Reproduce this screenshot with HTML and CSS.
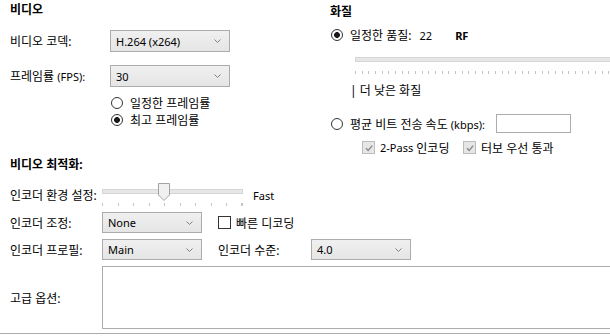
FILE: index.html
```html
<!DOCTYPE html>
<html lang="ko">
<head>
  <meta charset="UTF-8">
  <title>비디오</title>
  <link rel="stylesheet" href="styles.css">
</head>
<body>
  <div class="top">
    <!-- 비디오 -->
    <div class="col-left">
      <div class="title">비디오</div>
      <div class="row row-codec">
        <span class="label">비디오 코덱:</span>
        <div class="select wide">H.264 (x264)<svg class="chev" width="7" height="4"><path d="M0.5 0.5 L3.5 3.5 L6.5 0.5" stroke="#808080" fill="none"/></svg></div>
      </div>
      <div class="row row-fps">
        <span class="label">프레임률 <span class="en">(FPS):</span></span>
        <div class="select wide">30<svg class="chev" width="7" height="4"><path d="M0.5 0.5 L3.5 3.5 L6.5 0.5" stroke="#808080" fill="none"/></svg></div>
      </div>
      <div class="radios">
        <div class="opt"><span class="radio"></span>일정한 프레임률</div>
        <div class="opt"><span class="radio on"></span>최고 프레임률</div>
      </div>
    </div>
    <!-- 화질 -->
    <div class="col-right">
      <div class="title title-q">화질</div>
      <div class="opt opt-q">
        <span class="radio on"></span>일정한 품질:<span class="en rf-val">22</span><b class="en rf">RF</b>
      </div>
      <div class="q-track"></div>
      <div class="q-ticks"></div>
      <div class="lower">| 더 낮은 화질</div>
      <div class="opt opt-rate">
        <span class="radio"></span><span class="rate-label">평균 비트 전송 속도 <span class="en">(kbps):</span></span><div class="textbox"></div>
      </div>
      <div class="checks">
        <div class="chk-item first">
          <span class="chk dis"><svg width="10" height="10"><path d="M2 5.2 L4.2 7.4 L8.2 2.6" stroke="#8a8a8a" stroke-width="1.4" fill="none"/></svg></span><span class="en">2-Pass</span>&nbsp;인코딩
        </div>
        <div class="chk-item">
          <span class="chk dis"><svg width="10" height="10"><path d="M2 5.2 L4.2 7.4 L8.2 2.6" stroke="#8a8a8a" stroke-width="1.4" fill="none"/></svg></span>터보 우선 통과
        </div>
      </div>
    </div>
  </div>

  <!-- 비디오 최적화 -->
  <div class="opt-section">
    <div class="title">비디오 최적화:</div>
    <div class="orow row-preset">
      <span class="olabel">인코더 환경 설정:</span>
      <div class="pslider">
        <div class="track"></div>
        <div class="ticks"></div>
        <svg class="thumb" width="12" height="18"><path d="M0.5 0.5 H11.5 V12 L6 17.5 L0.5 12 Z" fill="#f0f0f0" stroke="#a2a2a2"/></svg>
      </div>
      <span class="en fast">Fast</span>
    </div>
    <div class="orow row-tune">
      <span class="olabel">인코더 조정:</span>
      <div class="select narrow">None<svg class="chev" width="7" height="4"><path d="M0.5 0.5 L3.5 3.5 L6.5 0.5" stroke="#808080" fill="none"/></svg></div>
      <span class="chk plain"></span>빠른 디코딩
    </div>
    <div class="orow row-profile">
      <span class="olabel">인코더 프로필:</span>
      <div class="select narrow">Main<svg class="chev" width="7" height="4"><path d="M0.5 0.5 L3.5 3.5 L6.5 0.5" stroke="#808080" fill="none"/></svg></div>
      <span class="level-label">인코더 수준:</span>
      <div class="select narrow">4.0<svg class="chev" width="7" height="4"><path d="M0.5 0.5 L3.5 3.5 L6.5 0.5" stroke="#808080" fill="none"/></svg></div>
    </div>
    <div class="orow row-adv">
      <span class="olabel">고급 옵션:</span>
      <div class="adv-box"></div>
    </div>
  </div>
  <div class="sep"></div>
</body>
</html>
```

FILE: styles.css
```css
* {margin: 0; padding: 0; box-sizing: border-box;}
body {
  width: 610px;
  height: 336px;
  overflow: hidden;
  background: #fff;
  color: #000;
  font: 12px "Noto Sans", "Noto Sans CJK KR", sans-serif;
}
/* 영문은 조금 작게 */
.en {font-size: 11px;}
.top {
  display: flex;
  height: 155px;
}
.col-left {
  width: 320px;
  flex: none;
  padding-left: 10px;
}
.col-right {
  flex: 1;
  padding-left: 10px;
  white-space: nowrap;
  overflow: hidden;
}
.title {
  font-weight: bold;
  line-height: 16px;
  height: 18px;
  padding-top: 2px;
}
.title-q {
  padding-top: 4px;
  height: 20px;
}
.row {
  display: flex;
  align-items: center;
}
.label {
  width: 100px;
}
.row-codec {margin-top: 12px;}
.row-fps {margin-top: 13px;}
.select {
  height: 22px;
  border: 1px solid #acacac;
  background: linear-gradient(#f0f0f0, #e5e5e5);
  padding: 0 8px 0 5px;
  display: flex;
  align-items: center;
  justify-content: space-between;
  font-size: 11px;
}
.select.wide {width: 120px;}
.select.narrow {width: 100px; height: 21px;}
.chev {display: block;}

/* 라디오 */
.radios {
  margin-top: 7px;
  padding-left: 101px;
}
.opt {
  display: flex;
  align-items: center;
  height: 17px;
}
.radio {
  width: 12px;
  height: 12px;
  flex: none;
  border: 1px solid #333;
  border-radius: 50%;
  background: #fff;
  margin-right: 7px;
}
.radio.on {
  background: radial-gradient(circle, #1a1a1a 2.6px, #fff 3.2px);
}

/* 화질 */
.opt-q {
  margin-top: 7px;
  height: 16px;
  padding-left: 1px;
}
.rf-val {margin-left: 8px;}
.rf {margin-left: 23px;}
.q-track {
  margin-top: 14px;
  margin-left: 25px;
  height: 5px;
  border: 1px solid #d6d6d6;
  border-right: none;
  background: #e7e7e7;
}
.q-ticks {
  margin-top: 9px;
  margin-left: 25px;
  height: 3px;
  background: repeating-linear-gradient(to right, #c4c4c4 0 1px, transparent 1px 6.67px);
}
.lower {
  margin-top: 9px;
  margin-left: 20px;
  line-height: 16px;
}
.opt-rate {
  margin-top: 15px;
  height: 19px;
  padding-left: 1px;
}
.rate-label {width: 146px;}
.textbox {
  width: 75px;
  height: 19px;
  border: 1px solid #acacac;
  background: #fff;
}
.checks {
  display: flex;
  margin-top: 8px;
  padding-left: 32px;
  height: 13px;
  align-items: center;
}
.chk-item {
  display: flex;
  align-items: center;
}
.chk-item.first {width: 101px;}
.chk {
  width: 13px;
  height: 13px;
  flex: none;
  display: flex;
  align-items: center;
  justify-content: center;
  margin-right: 5px;
}
.chk.dis {
  border: 1px solid #bcbcbc;
  background: #e6e6e6;
}
.chk.plain {
  border: 1px solid #333;
  background: #fff;
  margin-left: 16px;
}

/* 비디오 최적화 */
.opt-section {
  padding-left: 10px;
  white-space: nowrap;
}
.orow {
  display: flex;
  align-items: center;
}
.olabel {
  width: 92px;
  flex: none;
}
.row-preset {
  margin-top: 10px;
  height: 24px;
}
.pslider {
  position: relative;
  width: 141px;
  height: 24px;
}
.track {
  margin-top: 6px;
  height: 5px;
  border: 1px solid #d6d6d6;
  background: #e7e7e7;
}
.ticks {
  margin-top: 9px;
  height: 3px;
  background: repeating-linear-gradient(to right, #c4c4c4 0 1px, transparent 1px 15.5px);
}
.thumb {
  position: absolute;
  left: 56px;
  top: 0;
}
.fast {margin-left: 10px;}
.row-tune {
  margin-top: 5px;
  height: 21px;
}
.row-profile {
  margin-top: 6px;
  height: 21px;
}
.level-label {
  width: 93px;
  margin-left: 16px;
}
.row-adv {
  margin-top: 6px;
}
.adv-box {
  flex: 1;
  height: 63px;
  border: 1px solid #acacac;
  border-right: none;
  background: #fff;
}
.sep {
  margin-top: 4px;
  border-top: 1px solid #acacac;
}
```
